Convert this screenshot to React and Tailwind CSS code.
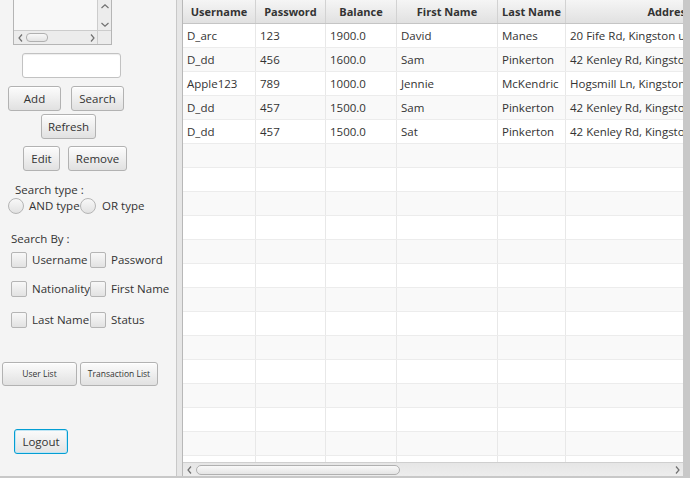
import React from "react";

const cols = [
  { name: "Username", w: "w-[73px]" },
  { name: "Password", w: "w-[70px]" },
  { name: "Balance", w: "w-[71px]" },
  { name: "First Name", w: "w-[101px]" },
  { name: "Last Name", w: "w-[68px]" },
  { name: "Address", w: "w-[208px]" },
];

const rows = [
  ["D_arc", "123", "1900.0", "David", "Manes", "20 Fife Rd, Kingston upon Thames"],
  ["D_dd", "456", "1600.0", "Sam", "Pinkerton", "42 Kenley Rd, Kingston upon Thames"],
  ["Apple123", "789", "1000.0", "Jennie", "McKendric", "Hogsmill Ln, Kingston upon Thames"],
  ["D_dd", "457", "1500.0", "Sam", "Pinkerton", "42 Kenley Rd, Kingston upon Thames"],
  ["D_dd", "457", "1500.0", "Sat", "Pinkerton", "42 Kenley Rd, Kingston upon Thames"],
];

const allRows = [...rows, ...Array.from({ length: 14 }, () => ["", "", "", "", "", ""])];

const Chevron = ({ dir }) => {
  const hz = dir === "left" || dir === "right";
  const pts = {
    left: "4,0.5 1,4 4,7.5",
    right: "1,0.5 4,4 1,7.5",
    up: "0.5,4 4,0.8 7.5,4",
    down: "0.5,1 4,4.2 7.5,1",
  }[dir];
  return (
    <svg width={hz ? 5 : 8} height={hz ? 8 : 5} viewBox={hz ? "0 0 5 8" : "0 0 8 5"} className="shrink-0">
      <polyline points={pts} fill="none" stroke="#707070" strokeWidth="1.2" />
    </svg>
  );
};

const btn =
  "flex items-center justify-center rounded-[3px] border border-[#b2b2b2] bg-linear-to-b from-[#fcfcfc] to-[#e1e1e1] text-[#333] leading-none shadow-[inset_0_1px_0_#ffffff]";

const Box = () => (
  <div className="w-[16px] h-[16px] shrink-0 rounded-[2px] border border-[#b5b5b5] bg-linear-to-b from-[#f8f8f8] to-[#e2e2e2]" />
);

const Radio = () => (
  <div className="w-[16px] h-[16px] shrink-0 rounded-full border border-[#b5b5b5] bg-linear-to-b from-[#f8f8f8] to-[#e2e2e2]" />
);

const Check = ({ label, w }) => (
  <div className={`${w} flex items-center gap-[5px] whitespace-nowrap`}>
    <Box />
    <span>{label}</span>
  </div>
);

const SidePanel = () => (
  <aside className="w-[177px] shrink-0 border-r border-[#c8c8c8] flex flex-col">
    {/* scrolled list */}
    <div className="ml-[13px] w-[99px] h-[45px] border-x border-b border-[#b5b5b5] bg-[#f8f8f8] flex flex-col">
      <div className="flex flex-1">
        <div className="flex-1" />
        <div className="w-[14px] border-l border-[#cccccc] bg-[#ececec] flex flex-col items-center justify-between pt-[4px] pb-[3px]">
          <Chevron dir="up" />
          <Chevron dir="down" />
        </div>
      </div>
      <div className="h-[14px] flex border-t border-[#cccccc]">
        <div className="flex-1 bg-[#ececec] flex items-center pl-[4px] pr-[2px] gap-[3px]">
          <Chevron dir="left" />
          <div className="w-[22px] h-[9px] rounded-[4px] border border-[#b0b0b0] bg-linear-to-b from-[#f8f8f8] to-[#e4e4e4]" />
          <div className="flex-1" />
          <Chevron dir="right" />
        </div>
        <div className="w-[14px] border-l border-[#cccccc] bg-[#ececec]" />
      </div>
    </div>

    <div className="mt-[8px] ml-[22px] w-[99px] h-[25px] rounded-[3px] border border-[#c2c2c2] bg-white shadow-[inset_0_1px_1px_#eeeeee]" />

    <div className="mt-[8px] flex">
      <button className={`${btn} ml-[8px] w-[53px] h-[25px]`}>Add</button>
      <button className={`${btn} ml-[10px] w-[53px] h-[25px]`}>Search</button>
    </div>
    <button className={`${btn} mt-[3px] ml-[41px] w-[55px] h-[25px]`}>Refresh</button>
    <div className="mt-[7px] flex">
      <button className={`${btn} ml-[23px] w-[37px] h-[25px]`}>Edit</button>
      <button className={`${btn} ml-[8px] w-[59px] h-[25px]`}>Remove</button>
    </div>

    <div className="mt-[11px] ml-[15px] h-[16px] leading-[16px]">Search type :</div>
    <div className="ml-[8px] h-[16px] flex items-center">
      <div className="w-[72px] flex items-center gap-[5px] whitespace-nowrap">
        <Radio />
        <span>AND type</span>
      </div>
      <div className="flex items-center gap-[6px] whitespace-nowrap">
        <Radio />
        <span>OR type</span>
      </div>
    </div>

    <div className="mt-[17px] ml-[11px] h-[16px] leading-[16px]">Search By :</div>
    <div className="mt-[5px] ml-[11px] h-[16px] flex items-center">
      <Check label="Username" w="w-[79px]" />
      <Check label="Password" w="" />
    </div>
    <div className="mt-[13px] ml-[11px] h-[16px] flex items-center">
      <Check label="Nationality" w="w-[79px]" />
      <Check label="First Name" w="" />
    </div>
    <div className="mt-[15px] ml-[11px] h-[16px] flex items-center">
      <Check label="Last Name" w="w-[79px]" />
      <Check label="Status" w="" />
    </div>

    <div className="mt-[34px] flex">
      <button className={`${btn} ml-[2px] w-[75px] h-[24px] text-[8.5px]`}>User List</button>
      <button className={`${btn} ml-[3px] w-[78px] h-[24px] text-[8.5px]`}>Transaction List</button>
    </div>

    <button className="mt-[43px] ml-[14px] w-[54px] h-[25px] flex items-center justify-center rounded-[3px] border border-[#039ed3] bg-linear-to-b from-[#fbfbfb] to-[#e3e3e3] text-[#333] leading-none shadow-[inset_0_0_0_1px_#bfe5f4]">
      Logout
    </button>
  </aside>
);

const Table = () => (
  <main className="w-[500px] shrink-0 flex flex-col bg-white overflow-hidden">
    <div className="flex-1 overflow-hidden flex flex-col">
      <div className="flex w-max h-[24px] shrink-0 border-b border-[#c5c5c5] bg-linear-to-b from-[#f5f5f5] to-[#e1e1e1]">
        {cols.map((c) => (
          <div
            key={c.name}
            className={`${c.w} shrink-0 flex items-center justify-center pt-[1px] border-r border-[#d2d2d2] font-bold text-[11px] text-[#333] whitespace-nowrap`}
          >
            {c.name}
          </div>
        ))}
      </div>
      {allRows.map((r, i) => (
        <div
          key={i}
          className={`flex w-max h-[24px] shrink-0 border-b border-[#ececec] ${i % 2 === 1 ? "bg-[#f9f9f9]" : "bg-white"}`}
        >
          {cols.map((c, j) => (
            <div
              key={c.name}
              className={`${c.w} shrink-0 flex items-center px-[4px] pt-[1px] border-r border-[#e8e8e8] whitespace-nowrap overflow-hidden text-[#333]`}
            >
              {r[j]}
            </div>
          ))}
        </div>
      ))}
    </div>
    <div className="h-[14px] shrink-0 flex items-center border-t border-[#cfcfcf] bg-linear-to-b from-[#e6e6e6] to-[#ededed] pl-[4px] pr-[3px]">
      <Chevron dir="left" />
      <div className="ml-[4px] w-[204px] h-[10px] rounded-[5px] border border-[#b0b0b0] bg-linear-to-b from-[#f9f9f9] to-[#e5e5e5]" />
      <div className="flex-1" />
      <Chevron dir="right" />
    </div>
  </main>
);

export default function App() {
  return (
    <div className="w-[690px] h-[478px] flex border-b-2 border-[#c8c8c8] bg-[#f4f4f4] font-['Open_Sans',sans-serif] text-[11.5px] text-[#333] overflow-hidden">
      <SidePanel />
      <div className="w-[6px] shrink-0 bg-[#e6e6e6] border-r border-[#b8b8b8]" />
      <Table />
      <div className="w-[7px] shrink-0 bg-[#c8c8c8]" />
    </div>
  );
}
